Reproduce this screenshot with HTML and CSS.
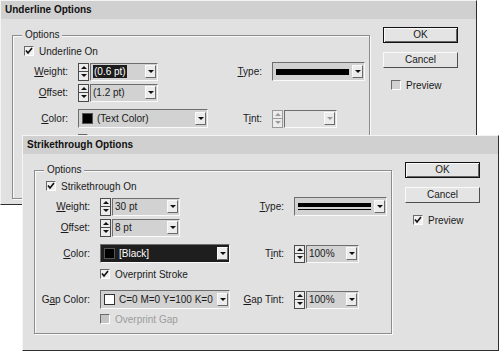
FILE: index.html
```html
<!DOCTYPE html>
<html lang="en">
<head>
    <meta charset="UTF-8">
    <title>Underline and Strikethrough Options</title>
    <link rel="stylesheet" href="styles.css">
</head>
<body>
    <!-- Underline Options dialog (behind) -->
    <div class="dialog underline-dlg">
        <div class="titlebar">Underline Options</div>
        <div class="dlg-body">
            <div class="group">
                <span class="legend">Options</span>
                <label class="check-row first">
                    <span class="box"><svg width="8" height="8" viewBox="0 0 8 8"><path d="M1 3.5 L3 6 L7 1" fill="none" stroke="#111" stroke-width="1.6"/></svg></span>
                    Underline On
                </label>
                <div class="row r-weight">
                    <span class="lbl"><u>W</u>eight:</span>
                    <div class="combo">
                        <span class="spin"><span class="up"></span><span class="down"></span></span>
                        <span class="field"><span class="sel">(0.6 pt)</span><span class="drop-btn"></span></span>
                    </div>
                    <span class="lbl"><u>T</u>ype:</span>
                    <span class="field type"><span class="stroke single"></span><span class="drop-btn"></span></span>
                </div>
                <div class="row r-offset">
                    <span class="lbl"><u>O</u>ffset:</span>
                    <div class="combo">
                        <span class="spin"><span class="up"></span><span class="down"></span></span>
                        <span class="field">(1.2 pt)<span class="drop-btn"></span></span>
                    </div>
                </div>
                <div class="row r-color">
                    <span class="lbl"><u>C</u>olor:</span>
                    <span class="field wide"><span class="swatch"></span>(Text Color)<span class="drop-btn"></span></span>
                    <span class="lbl">T<u>i</u>nt:</span>
                    <div class="combo tint disabled">
                        <span class="spin"><span class="up"></span><span class="down"></span></span>
                        <span class="field"><span class="drop-btn"></span></span>
                    </div>
                </div>
                <label class="check-row sub r-overprint disabled">
                    <span class="box"></span>
                    Overprint Stroke
                </label>
            </div>
            <div class="buttons">
                <span class="btn default">OK</span>
                <span class="btn">Cancel</span>
                <label class="check-row preview">
                    <span class="box off"></span>
                    Preview
                </label>
            </div>
        </div>
    </div>

    <!-- Strikethrough Options dialog (front) -->
    <div class="dialog strike-dlg">
        <div class="titlebar">Strikethrough Options</div>
        <div class="dlg-body">
            <div class="group">
                <span class="legend">Options</span>
                <label class="check-row first">
                    <span class="box"><svg width="8" height="8" viewBox="0 0 8 8"><path d="M1 3.5 L3 6 L7 1" fill="none" stroke="#111" stroke-width="1.6"/></svg></span>
                    Strikethrough On
                </label>
                <div class="row r-weight">
                    <span class="lbl"><u>W</u>eight:</span>
                    <div class="combo">
                        <span class="spin"><span class="up"></span><span class="down"></span></span>
                        <span class="field">30 pt<span class="drop-btn"></span></span>
                    </div>
                    <span class="lbl"><u>T</u>ype:</span>
                    <span class="field type"><span class="stroke double"></span><span class="drop-btn"></span></span>
                </div>
                <div class="row r-offset">
                    <span class="lbl"><u>O</u>ffset:</span>
                    <div class="combo">
                        <span class="spin"><span class="up"></span><span class="down"></span></span>
                        <span class="field">8 pt<span class="drop-btn"></span></span>
                    </div>
                </div>
                <div class="row r-color">
                    <span class="lbl"><u>C</u>olor:</span>
                    <span class="field wide dark"><span class="swatch"></span>[Black]<span class="drop-btn"></span></span>
                    <span class="lbl">T<u>i</u>nt:</span>
                    <div class="combo tint">
                        <span class="spin"><span class="up"></span><span class="down"></span></span>
                        <span class="field">100%<span class="drop-btn"></span></span>
                    </div>
                </div>
                <label class="check-row sub r-overprint">
                    <span class="box"><svg width="8" height="8" viewBox="0 0 8 8"><path d="M1 3.5 L3 6 L7 1" fill="none" stroke="#111" stroke-width="1.6"/></svg></span>
                    Overprint Stroke
                </label>
                <div class="row r-gap">
                    <span class="lbl">G<u>a</u>p Color:</span>
                    <span class="field wide"><span class="swatch white"></span>C=0 M=0 Y=100 K=0<span class="drop-btn"></span></span>
                    <span class="lbl"><u>G</u>ap Tint:</span>
                    <div class="combo tint">
                        <span class="spin"><span class="up"></span><span class="down"></span></span>
                        <span class="field">100%<span class="drop-btn"></span></span>
                    </div>
                </div>
                <label class="check-row sub r-gap-over disabled">
                    <span class="box grey"></span>
                    Overprint Gap
                </label>
            </div>
            <div class="buttons">
                <span class="btn default">OK</span>
                <span class="btn">Cancel</span>
                <label class="check-row preview">
                    <span class="box"><svg width="8" height="8" viewBox="0 0 8 8"><path d="M1 3.5 L3 6 L7 1" fill="none" stroke="#111" stroke-width="1.6"/></svg></span>
                    Preview
                </label>
            </div>
        </div>
    </div>
</body>
</html>
```

FILE: styles.css
```css
body {
    margin: 0;
    width: 500px;
    height: 352px;
    position: relative;
    overflow: hidden;
    background: #fff;
    font-family: "Liberation Sans", Arial, sans-serif;
    font-size: 10px;
    color: #1a1a1a;
}
.dialog {
    position: absolute;
    width: 477px;
    box-sizing: border-box;
    background: #e1e1e1;
    border: 1px solid;
    border-color: #f4f4f4 #2e2e2e #2e2e2e #f4f4f4;
}
.underline-dlg {
    left: 0;
    top: 0;
    height: 205px;
}
.strike-dlg {
    left: 22px;
    top: 135px;
    height: 216px;
}
.titlebar {
    height: 18px;
    line-height: 18px;
    padding-left: 4px;
    background: #d0d0d0;
    font-weight: bold;
    color: #111;
}
.dlg-body {
    display: flex;
    align-items: flex-start;
    padding: 8px 0 0 11px;
}
.group {
    position: relative;
    width: 358px;
    height: 164px;
    margin-top: 8px;
    box-sizing: border-box;
    border: 1px solid #8c8c8c;
    box-shadow: inset 1px 1px 0 #fafafa, 1px 1px 0 #fafafa;
}
.legend {
    position: absolute;
    left: 9px;
    top: -7px;
    padding: 0 3px;
    line-height: 12px;
    background: #e1e1e1;
}
.check-row {
    display: flex;
    align-items: center;
    height: 10px;
    gap: 5px;
    padding-left: 11px;
}
.check-row.first {
    margin-top: 10px;
}
.check-row.sub {
    padding-left: 65px;
}
.box {
    width: 10px;
    height: 10px;
    box-sizing: border-box;
    border: 1px solid;
    border-color: #6a6a6a #fff #fff #6a6a6a;
    background: #f0f0f0;
    display: flex;
    align-items: center;
    justify-content: center;
}
.box.off {
    background: #d2d2d2;
}
.box.grey {
    background: #c4c4c4;
}
.disabled {
    color: #9c9c9c;
}
.row {
    display: grid;
    grid-template-columns: 55px 130px 44px 1fr;
    column-gap: 10px;
    align-items: center;
    height: 19px;
}
.r-weight {
    margin-top: 6px;
}
.r-offset {
    margin-top: 2px;
}
.r-color {
    margin-top: 7px;
}
.r-overprint {
    margin-top: 6px;
}
.r-gap {
    margin-top: 11px;
}
.r-gap-over {
    margin-top: 5px;
}
.lbl {
    text-align: right;
    white-space: nowrap;
}
.combo {
    display: flex;
    gap: 1px;
    width: 80px;
    height: 18px;
}
.combo.tint {
    width: 65px;
}
.spin {
    width: 11px;
    display: flex;
    flex-direction: column;
    box-sizing: border-box;
    border: 1px solid #4a4a4a;
    background: #ececec;
}
.spin span {
    flex: 1;
    display: flex;
    align-items: center;
    justify-content: center;
}
.spin .up {
    border-bottom: 1px solid #4a4a4a;
}
.spin .up::after,
.spin .down::after,
.drop-btn::after {
    content: "";
    border-left: 3px solid transparent;
    border-right: 3px solid transparent;
}
.spin .up::after {
    border-bottom: 3px solid #111;
}
.spin .down::after,
.drop-btn::after {
    border-top: 3px solid #111;
}
.disabled .spin {
    border-color: #9a9a9a;
}
.disabled .spin .up {
    border-bottom-color: #9a9a9a;
}
.disabled .spin .up::after {
    border-bottom-color: #9a9a9a;
}
.disabled .spin .down::after,
.disabled .drop-btn::after {
    border-top-color: #9a9a9a;
}
.field {
    flex: 1;
    display: flex;
    align-items: center;
    height: 18px;
    box-sizing: border-box;
    padding-left: 2px;
    border: 1px solid;
    border-color: #6e6e6e #fafafa #fafafa #6e6e6e;
    background: #d2d2d2;
    white-space: nowrap;
}
.disabled .field {
    background: #e1e1e1;
}
.field.wide {
    width: 130px;
    height: 19px;
    padding-left: 3px;
}
.field.dark {
    background: #1e1e1e;
    color: #fff;
}
.field.type {
    width: 93px;
    height: 19px;
    padding-left: 3px;
}
.sel {
    background: #1c1c1c;
    color: #fff;
    padding: 1px 1px;
}
.swatch {
    width: 9px;
    height: 9px;
    margin-right: 4px;
    background: #000;
    border: 1px solid #555;
}
.swatch.white {
    background: #fff;
    border-color: #333;
}
.drop-btn {
    width: 11px;
    height: 13px;
    margin-left: auto;
    margin-right: 1px;
    box-sizing: border-box;
    border: 1px solid;
    border-color: #fafafa #6a6a6a #6a6a6a #fafafa;
    background: #ececec;
    display: flex;
    align-items: center;
    justify-content: center;
}
.stroke {
    width: 73px;
    box-sizing: border-box;
}
.stroke.single {
    height: 6px;
    background: #000;
}
.stroke.double {
    height: 7px;
    border-top: 4px solid #000;
    border-bottom: 1px solid #000;
}
.buttons {
    display: flex;
    flex-direction: column;
    gap: 9px;
    margin-left: 13px;
}
.btn {
    width: 75px;
    height: 16px;
    box-sizing: border-box;
    line-height: 14px;
    text-align: center;
    border: 1px solid;
    border-color: #fafafa #4e4e4e #4e4e4e #fafafa;
    background: #e4e4e4;
}
.btn.default {
    border-color: #111;
    box-shadow: inset 1px 1px 0 #fafafa, inset -1px -1px 0 #666;
}
.check-row.preview {
    padding-left: 8px;
    margin-top: 3px;
}
```
